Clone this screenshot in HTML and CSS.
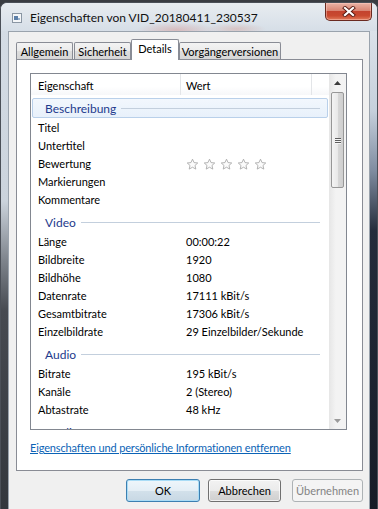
FILE: index.html
```html
<!DOCTYPE html>
<html lang="de">

<head>
    <meta charset="UTF-8">
    <title>Eigenschaften von VID_20180411_230537</title>
    <link rel="stylesheet" href="styles.css">
</head>

<body>
    <div class="window">
        <div class="titlebar">
            <svg class="app-icon" width="10" height="10" viewBox="0 0 10 10">
                <rect x="0.5" y="0.5" width="9" height="9" fill="#f4f6f8" stroke="#8a96a3"/>
                <rect x="2" y="3" width="4" height="4" fill="#5c7fa8"/>
                <rect x="6" y="5" width="2" height="2" fill="#9bb4cf"/>
            </svg>
            <span class="title">Eigenschaften von VID_20180411_230537</span>
            <div class="close-btn">
                <svg width="14" height="11" viewBox="0 0 14 11">
                    <path d="M3 2 L11 9 M11 2 L3 9" stroke="#5a1c14" stroke-width="4" stroke-linecap="square"/>
                    <path d="M3 2 L11 9 M11 2 L3 9" stroke="#ffffff" stroke-width="2.2" stroke-linecap="square"/>
                </svg>
            </div>
        </div>

        <div class="frame-body">
            <div class="frame-left"></div>

            <div class="client">
                <div class="tabs">
                    <div class="tab tab-allgemein">Allgemein</div>
                    <div class="tab tab-sicherheit">Sicherheit</div>
                    <div class="tab tab-details active">Details</div>
                    <div class="tab tab-versionen">Vorgängerversionen</div>
                </div>

                <div class="panel">
                    <div class="listview">
                        <div class="lv-main">
                            <div class="lv-header">
                                <div class="hcol col-name">Eigenschaft</div>
                                <div class="hcol col-value">Wert</div>
                                <div class="hcol col-rest"></div>
                            </div>

                            <div class="lv-body">
                                <div class="group focus"><span class="group-label">Beschreibung</span><span class="rule"></span></div>
                                <div class="row"><span class="name">Titel</span><span class="value"></span></div>
                                <div class="row"><span class="name">Untertitel</span><span class="value"></span></div>
                                <div class="row">
                                    <span class="name">Bewertung</span>
                                    <span class="value stars">
                                        <svg class="star" viewBox="0 0 24 24"><path d="M12 2.2l2.9 6.3 6.8.7-5.1 4.6 1.5 6.7L12 17l-6.1 3.5 1.5-6.7-5.1-4.6 6.8-.7z"/></svg>
                                        <svg class="star" viewBox="0 0 24 24"><path d="M12 2.2l2.9 6.3 6.8.7-5.1 4.6 1.5 6.7L12 17l-6.1 3.5 1.5-6.7-5.1-4.6 6.8-.7z"/></svg>
                                        <svg class="star" viewBox="0 0 24 24"><path d="M12 2.2l2.9 6.3 6.8.7-5.1 4.6 1.5 6.7L12 17l-6.1 3.5 1.5-6.7-5.1-4.6 6.8-.7z"/></svg>
                                        <svg class="star" viewBox="0 0 24 24"><path d="M12 2.2l2.9 6.3 6.8.7-5.1 4.6 1.5 6.7L12 17l-6.1 3.5 1.5-6.7-5.1-4.6 6.8-.7z"/></svg>
                                        <svg class="star" viewBox="0 0 24 24"><path d="M12 2.2l2.9 6.3 6.8.7-5.1 4.6 1.5 6.7L12 17l-6.1 3.5 1.5-6.7-5.1-4.6 6.8-.7z"/></svg>
                                    </span>
                                </div>
                                <div class="row"><span class="name">Markierungen</span><span class="value"></span></div>
                                <div class="row"><span class="name">Kommentare</span><span class="value"></span></div>

                                <div class="group"><span class="group-label">Video</span><span class="rule"></span></div>
                                <div class="row"><span class="name">Länge</span><span class="value">00:00:22</span></div>
                                <div class="row"><span class="name">Bildbreite</span><span class="value">1920</span></div>
                                <div class="row"><span class="name">Bildhöhe</span><span class="value">1080</span></div>
                                <div class="row"><span class="name">Datenrate</span><span class="value">17111 kBit/s</span></div>
                                <div class="row"><span class="name">Gesamtbitrate</span><span class="value">17306 kBit/s</span></div>
                                <div class="row"><span class="name">Einzelbildrate</span><span class="value">29 Einzelbilder/Sekunde</span></div>

                                <div class="group"><span class="group-label">Audio</span><span class="rule"></span></div>
                                <div class="row"><span class="name">Bitrate</span><span class="value">195 kBit/s</span></div>
                                <div class="row"><span class="name">Kanäle</span><span class="value">2 (Stereo)</span></div>
                                <div class="row"><span class="name">Abtastrate</span><span class="value">48 kHz</span></div>

                                <div class="group"><span class="group-label">Medien</span><span class="rule"></span></div>
                            </div>
                        </div>

                        <div class="scrollbar">
                            <div class="sb-btn">
                                <svg width="7" height="4" viewBox="0 0 7 4"><path d="M0 4 L3.5 0 L7 4z" fill="#3c3c3c"/></svg>
                            </div>
                            <div class="sb-track">
                                <div class="sb-thumb">
                                    <span class="grip"></span>
                                    <span class="grip"></span>
                                    <span class="grip"></span>
                                </div>
                            </div>
                            <div class="sb-btn">
                                <svg width="7" height="4" viewBox="0 0 7 4"><path d="M0 0 L3.5 4 L7 0z" fill="#9a9a9a"/></svg>
                            </div>
                        </div>
                    </div>

                    <a class="remove-link" href="#">Eigenschaften und persönliche Informationen entfernen</a>
                </div>

                <div class="buttons">
                    <button class="btn btn-default btn-ok">OK</button>
                    <button class="btn btn-cancel">Abbrechen</button>
                    <button class="btn btn-apply" disabled>Übernehmen</button>
                </div>
            </div>

            <div class="frame-right"></div>
        </div>
    </div>
</body>

</html>
```

FILE: styles.css
```css
body {
    margin: 0;
    padding: 0;
    width: 378px;
    height: 509px;
    overflow: hidden;
    background-color: #3a3d42;
    font-family: Lato, "Liberation Sans", sans-serif;
    font-size: 11px;
    color: #000;
}

.window {
    box-sizing: border-box;
    width: 378px;
    height: 507px;
    margin-top: 2px;
    border: 1px solid #4b5058;
    border-bottom: none;
    border-radius: 7px 7px 0 0;
    overflow: hidden;
    background: #dfe5ec;
}

/* title bar */

.titlebar {
    height: 28px;
    display: flex;
    align-items: center;
    padding-left: 11px;
    background:
        radial-gradient(ellipse 40px 8px at 175px 27px, rgba(214, 120, 110, 0.35), transparent),
        radial-gradient(ellipse 30px 6px at 235px 26px, rgba(214, 130, 110, 0.3), transparent),
        linear-gradient(to bottom, #e8ecf0 0%, #dde4eb 60%, #d6dee7 100%);
}

.app-icon {
    flex-shrink: 0;
    margin-right: 8px;
    margin-top: 1px;
}

.title {
    font-size: 12px;
    color: #111;
    white-space: nowrap;
}

.close-btn {
    align-self: flex-start;
    margin-left: auto;
    margin-right: 5px;
    width: 47px;
    height: 18px;
    box-sizing: border-box;
    border: 1px solid #6a2a20;
    border-top: none;
    border-radius: 0 0 5px 5px;
    display: flex;
    align-items: center;
    justify-content: center;
    background: linear-gradient(to bottom, #eab3a6 0%, #d98573 45%, #c4432e 50%, #c9492f 75%, #e27c5c 100%);
    box-shadow: inset 0 0 0 1px rgba(255, 210, 200, 0.45);
}

/* frame */

.frame-body {
    display: flex;
    height: 478px;
}

.frame-left {
    width: 7px;
    flex-shrink: 0;
    background: linear-gradient(to bottom, #d4dce5 0, #cbd3dc 170px, #7d838b 230px, #464a51 280px, #33373d 100%);
}

.frame-right {
    width: 7px;
    flex-shrink: 0;
    background: linear-gradient(to bottom, #dbe2ea 0, #c6d0dc 80px, #7f8ca0 140px, #242c3b 200px, #171c27 100%);
}

.client {
    width: 362px;
    flex-shrink: 0;
    box-sizing: border-box;
    border: 1px solid #9aa3ad;
    border-bottom: none;
    background: #f0f0f0;
}

/* tabs */

.tabs {
    display: flex;
    align-items: flex-end;
    height: 20px;
    padding-top: 7px;
    margin-left: 7px;
    position: relative;
    z-index: 1;
}

.tab {
    box-sizing: border-box;
    height: 17px;
    margin-right: 1px;
    border: 1px solid #898c95;
    border-bottom: none;
    border-radius: 2px 2px 0 0;
    background: linear-gradient(to bottom, #f3f3f3 0%, #ebebeb 50%, #dedede 50%, #d6d6d6 100%);
    text-align: center;
    line-height: 18px;
    white-space: nowrap;
}

.tab-allgemein { width: 57px; }
.tab-sicherheit { width: 57px; }
.tab-details { width: 48px; }
.tab-versionen { width: 102px; }

.tab.active {
    height: 21px;
    margin-bottom: -1px;
    margin-left: -1px;
    margin-right: 0;
    background: #fff;
    line-height: 18px;
}

.panel {
    box-sizing: border-box;
    width: 347px;
    height: 412px;
    margin-left: 7px;
    border: 1px solid #898c95;
    background: #fff;
    padding: 13px 0 0 13px;
}

/* list view */

.listview {
    box-sizing: border-box;
    width: 317px;
    height: 357px;
    border: 1px solid #828790;
    display: flex;
}

.lv-main {
    width: 298px;
    overflow: hidden;
}

.lv-header {
    display: flex;
    height: 21px;
    background: linear-gradient(to bottom, #ffffff 0%, #ffffff 60%, #f6f7f9 100%);
}

.hcol {
    box-sizing: border-box;
    height: 21px;
    line-height: 23px;
    border-right: 1px solid #e3e5e8;
}

.col-name {
    width: 150px;
    padding-left: 7px;
}

.col-value {
    width: 131px;
    padding-left: 5px;
}

.col-rest {
    flex: 1;
    border-right: none;
}

.lv-body {
    height: 334px;
    overflow: hidden;
}

.group {
    box-sizing: border-box;
    height: 24px;
    display: flex;
    align-items: center;
    padding-left: 14px;
    padding-top: 2px;
}

.group-label {
    font-size: 12px;
    color: #1e3a8c;
    margin-right: 5px;
}

.rule {
    flex: 1;
    height: 1px;
    margin-right: 9px;
    background: #c3cfdd;
}

.group.focus {
    height: 20px;
    margin: 3px 1px 1px 1px;
    padding-left: 12px;
    padding-top: 0;
    border: 1px solid #b9d0ea;
    border-radius: 2px;
    background: linear-gradient(to bottom, #f2f7fd 0%, #e8f1fb 100%);
}

.group.focus .rule {
    margin-right: 7px;
}

.row {
    display: flex;
    height: 18px;
    line-height: 18px;
}

.name {
    width: 150px;
    padding-left: 7px;
    box-sizing: border-box;
}

.value {
    padding-left: 5px;
    white-space: nowrap;
}

.stars {
    display: flex;
    align-items: center;
    gap: 4px;
}

.star {
    width: 13px;
    height: 13px;
    fill: #fbfbfb;
    stroke: #a8a8a8;
    stroke-width: 1.6;
    stroke-linejoin: round;
}

/* scrollbar */

.scrollbar {
    width: 17px;
    display: flex;
    flex-direction: column;
    background: linear-gradient(to right, #e6e6e6 0%, #f3f3f3 40%, #f3f3f3 100%);
}

.sb-btn {
    height: 17px;
    display: flex;
    align-items: center;
    justify-content: center;
}

.sb-track {
    flex: 1;
    padding-top: 1px;
}

.sb-thumb {
    box-sizing: border-box;
    width: 13px;
    height: 96px;
    margin-left: 2px;
    border: 1px solid #979797;
    border-radius: 2px;
    background: linear-gradient(to right, #f4f4f4 0%, #e9e9e9 50%, #d8d8d8 51%, #cfcfcf 100%);
    display: flex;
    flex-direction: column;
    align-items: center;
    justify-content: center;
    gap: 1px;
}

.grip {
    width: 6px;
    height: 1px;
    background: #5e5e5e;
    box-shadow: 0 1px 0 #f6f6f6;
}

/* link */

.remove-link {
    display: inline-block;
    margin-top: 11px;
    color: #0b63b6;
    text-decoration: underline;
    line-height: 14px;
    letter-spacing: -0.15px;
}

/* buttons */

.buttons {
    display: flex;
    justify-content: flex-end;
    padding-right: 6px;
    margin-top: 8px;
}

.btn {
    box-sizing: border-box;
    height: 23px;
    border: 1px solid #707070;
    border-radius: 3px;
    background: linear-gradient(to bottom, #f2f2f2 0%, #ebebeb 50%, #dddddd 50%, #cfcfcf 100%);
    box-shadow: inset 0 0 0 1px rgba(255, 255, 255, 0.7);
    font-family: Lato, "Liberation Sans", sans-serif;
    font-size: 11px;
    color: #000;
    padding: 0;
}

.btn-ok {
    width: 74px;
    border-color: #3c7fb1;
    box-shadow: inset 0 0 0 1px #a9dcf6;
    background: linear-gradient(to bottom, #eef6fb 0%, #e4eef5 50%, #d3e1eb 50%, #c8d8e4 100%);
}

.btn-cancel {
    width: 73px;
    margin-left: 8px;
}

.btn-apply {
    width: 71px;
    margin-left: 11px;
    border-color: #adb2b5;
    background: #f4f4f4;
    box-shadow: none;
    color: #838383;
}
```
